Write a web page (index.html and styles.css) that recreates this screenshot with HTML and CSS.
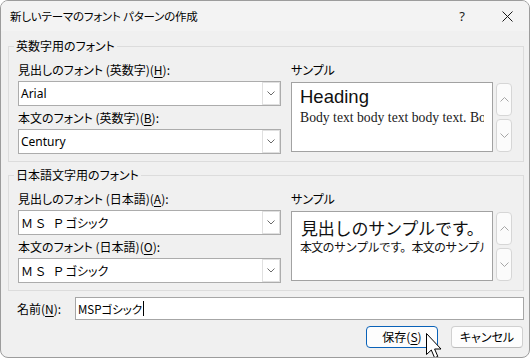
FILE: index.html
```html
<!DOCTYPE html>
<html lang="ja">
<head>
<meta charset="utf-8">
<title>新しいテーマのフォント パターンの作成</title>
<link rel="stylesheet" href="styles.css">
</head>
<body>
<div class="window">
  <div class="titlebar">
    <span class="title">新しいテーマのフォント パターンの作成</span>
    <span class="cap help">?</span>
    <span class="cap close"><svg width="11" height="11" viewBox="0 0 11 11"><path d="M0.5 0.5L10.5 10.5M10.5 0.5L0.5 10.5" stroke="#1a1a1a" stroke-width="1" fill="none"/></svg></span>
  </div>
  <div class="content">
    <fieldset class="group">
      <legend>英数字用のフォント</legend>
      <div class="cols">
        <div class="left">
          <div class="lbl">見出しのフォント (英数字)(<u>H</u>):</div>
          <div class="combo"><span class="combo-text">Arial</span><span class="combo-btn"><svg width="8" height="5" viewBox="0 0 8 5"><path d="M0.5 0.5L4 4L7.5 0.5" fill="none" stroke="#6a6a6a"/></svg></span></div>
          <div class="lbl lbl2">本文のフォント (英数字)(<u>B</u>):</div>
          <div class="combo"><span class="combo-text">Century</span><span class="combo-btn"><svg width="8" height="5" viewBox="0 0 8 5"><path d="M0.5 0.5L4 4L7.5 0.5" fill="none" stroke="#6a6a6a"/></svg></span></div>
        </div>
        <div class="right">
          <div class="lbl">サンプル</div>
          <div class="sample-row">
            <div class="sample en">
              <div class="clip">
                <div class="s-head">Heading</div>
                <div class="s-body">Body text body text body text. Body text</div>
              </div>
            </div>
            <div class="spin">
              <div class="spin-btn"><svg width="9" height="5" viewBox="0 0 9 5"><path d="M0.5 4.5L4.5 0.5L8.5 4.5" fill="none" stroke="#a6a6a6"/></svg></div>
              <div class="spin-btn"><svg width="9" height="5" viewBox="0 0 9 5"><path d="M0.5 0.5L4.5 4.5L8.5 0.5" fill="none" stroke="#a6a6a6"/></svg></div>
            </div>
          </div>
        </div>
      </div>
    </fieldset>

    <fieldset class="group group2">
      <legend>日本語文字用のフォント</legend>
      <div class="cols">
        <div class="left">
          <div class="lbl">見出しのフォント (日本語)(<u>A</u>):</div>
          <div class="combo"><span class="combo-text jp"><span class="ms">ＭＳ Ｐ</span>ゴシック</span><span class="combo-btn"><svg width="8" height="5" viewBox="0 0 8 5"><path d="M0.5 0.5L4 4L7.5 0.5" fill="none" stroke="#6a6a6a"/></svg></span></div>
          <div class="lbl lbl2">本文のフォント (日本語)(<u>O</u>):</div>
          <div class="combo"><span class="combo-text jp"><span class="ms">ＭＳ Ｐ</span>ゴシック</span><span class="combo-btn"><svg width="8" height="5" viewBox="0 0 8 5"><path d="M0.5 0.5L4 4L7.5 0.5" fill="none" stroke="#6a6a6a"/></svg></span></div>
        </div>
        <div class="right">
          <div class="lbl">サンプル</div>
          <div class="sample-row">
            <div class="sample jp">
              <div class="clip">
                <div class="s-head">見出しのサンプルです。</div>
                <div class="s-body">本文のサンプルです。本文のサンプルです。</div>
              </div>
            </div>
            <div class="spin">
              <div class="spin-btn"><svg width="9" height="5" viewBox="0 0 9 5"><path d="M0.5 4.5L4.5 0.5L8.5 4.5" fill="none" stroke="#a6a6a6"/></svg></div>
              <div class="spin-btn"><svg width="9" height="5" viewBox="0 0 9 5"><path d="M0.5 0.5L4.5 4.5L8.5 0.5" fill="none" stroke="#a6a6a6"/></svg></div>
            </div>
          </div>
        </div>
      </div>
    </fieldset>

    <div class="namerow">
      <span class="name-lbl">名前(<u>N</u>):</span>
      <div class="name-input"><span class="name-text">MSPゴシック</span><span class="caret"></span></div>
    </div>

    <div class="buttons">
      <span class="btn default">保存(<u>S</u>)</span>
      <span class="btn">キャンセル</span>
    </div>
  </div>

  <svg class="cursor" width="17" height="26" viewBox="0 0 17 26"><path d="M0.5 0.5L0.5 21.5L5.3 17L8.6 24.8L11.8 23.4L8.6 16L15 16Z" fill="#fff" stroke="#000" stroke-width="1" stroke-linejoin="round"/></svg>
</div>
</body>
</html>
```

FILE: styles.css
```css
* { box-sizing: border-box; }
html, body { margin: 0; padding: 0; background: #ffffff; }
body {
  font-family: "Noto Sans CJK JP", "Noto Sans", sans-serif;
  font-size: 12px;
  color: #000;
  font-feature-settings: "palt";
}
u { text-decoration: underline; text-underline-offset: 2px; }

.window {
  position: relative;
  width: 530px;
  height: 358px;
  border: 1px solid #9c9c9c;
  border-radius: 8px;
  background: #f0f0f0;
  overflow: hidden;
}

.titlebar {
  height: 30px;
  display: flex;
  align-items: center;
  background: #f3f3f3;
}
.title {
  flex: 1;
  padding-left: 9px;
  font-size: 11.5px;
  letter-spacing: -0.2px;
  line-height: 16px;
  white-space: nowrap;
}
.cap {
  width: 46px;
  height: 30px;
  display: flex;
  align-items: center;
  justify-content: center;
}
.cap.help { font-family: "Noto Sans", sans-serif; font-size: 13px; color: #1a1a1a; }
.cap.close { width: 44px; }

.content { padding: 7px 5px 0 7px; }

.group {
  margin: 0;
  width: 516px;
  min-width: 0;
  padding: 8px 11px 7px 9px;
  border: 1px solid #dcdcdc;
}
.group legend {
  padding: 0 2px;
  margin-left: -4px;
  line-height: 16px;
  font-size: 12px;
}
.group2 { margin-top: 5px; }

.cols { display: flex; gap: 10px; }
.left { width: 263px; display: flex; flex-direction: column; }
.right { width: 221px; display: flex; flex-direction: column; }

.lbl { line-height: 16px; height: 16px; white-space: nowrap; }
.lbl2 { margin-top: 4px; }

.combo {
  margin-top: 3px;
  height: 25px;
  border: 1px solid #acacac;
  background: #fff;
  display: flex;
}
.combo-text {
  flex: 1;
  padding-left: 2px;
  line-height: 23px;
  font-family: "Noto Sans", "Noto Sans CJK JP", sans-serif;
  font-size: 12px;
  white-space: nowrap;
}
.combo-text.jp { font-family: "Noto Sans CJK JP", sans-serif; }
.ms { letter-spacing: 3px; }
.combo-btn {
  width: 18px;
  border: 1px solid #e0e0e0;
  display: flex;
  align-items: center;
  justify-content: center;
  background: #fff;
}

.sample-row { margin-top: 4px; display: flex; height: 70px; }
.sample {
  width: 202px;
  height: 70px;
  border: 1px solid #a2a2a2;
  background: #fff;
  padding: 3px 8px 0 8px;
}
.clip { overflow: hidden; white-space: nowrap; }
.sample.en .s-head {
  font-family: "Liberation Sans", Arial, sans-serif;
  font-size: 18.5px;
  line-height: 22px;
  color: #101010;
}
.sample.en .s-body {
  margin-top: 2px;
  font-family: "Liberation Serif", "Times New Roman", serif;
  font-size: 13.7px;
  line-height: 16px;
  color: #1a1a1a;
}
.sample.jp { padding-top: 5px; }
.sample.jp .s-head {
  font-family: "Noto Sans CJK JP", sans-serif;
  font-feature-settings: normal;
  font-size: 17px;
  letter-spacing: -0.2px;
  line-height: 22px;
  padding-left: 1px;
  color: #111;
}
.sample.jp .s-body {
  font-family: "Noto Sans CJK JP", sans-serif;
  font-feature-settings: normal;
  font-size: 12px;
  letter-spacing: -0.7px;
  line-height: 16px;
  color: #111;
}

.spin {
  margin-left: 3px;
  padding-top: 1px;
  display: flex;
  flex-direction: column;
  gap: 3px;
}
.spin-btn {
  width: 16px;
  height: 33px;
  border: 1px solid #d6d6d6;
  border-radius: 4px;
  background: #fbfbfb;
  display: flex;
  align-items: center;
  justify-content: center;
}

.namerow { margin-top: 6px; display: flex; align-items: center; height: 23px; }
.name-lbl { width: 67px; padding-left: 9px; line-height: 16px; white-space: nowrap; }
.name-input {
  flex: 1;
  height: 23px;
  border: 1px solid #a6a6a6;
  background: #fff;
  display: flex;
  align-items: center;
  padding-left: 2px;
}
.name-text { font-size: 11.5px; line-height: 16px; white-space: nowrap; }
.caret { width: 1px; height: 15px; background: #000; margin-left: 1px; }

.buttons {
  margin-top: 6px;
  display: flex;
  justify-content: flex-end;
  gap: 13px;
  padding-right: 1px;
}
.btn {
  width: 72px;
  height: 22px;
  border: 1px solid #d0d0d0;
  border-bottom-color: #bcbcbc;
  border-radius: 4px;
  background: #fdfdfd;
  display: flex;
  align-items: center;
  justify-content: center;
  line-height: 16px;
}
.btn.default { border: 1px solid #0a62b8; }

.cursor { position: absolute; left: 425px; top: 332px; }
```
